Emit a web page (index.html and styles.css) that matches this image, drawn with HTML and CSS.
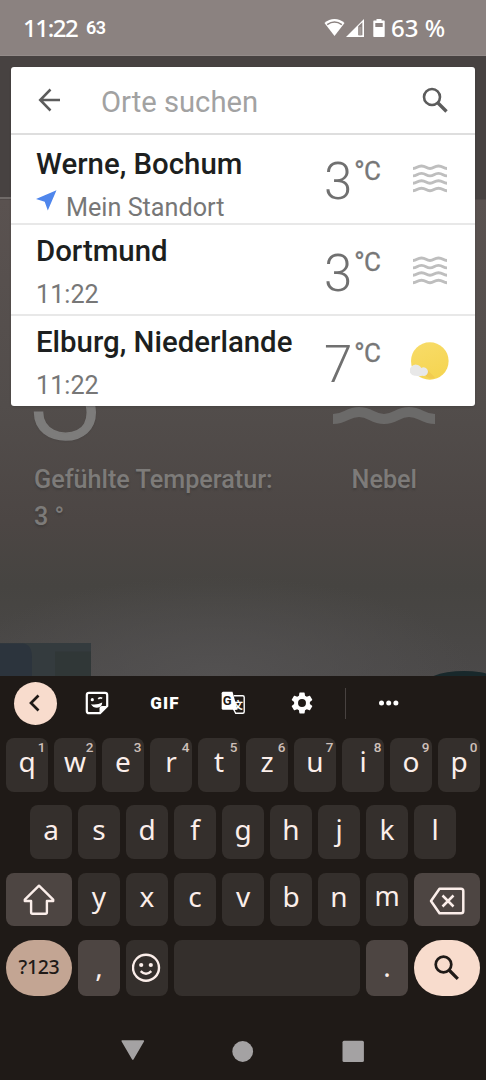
FILE: index.html
```html
<!DOCTYPE html>
<html lang="de">
<head>
<meta charset="utf-8">
<title>Orte suchen</title>
<link rel="stylesheet" href="styles.css">
</head>
<body>
<div class="phone">
  <header class="status">
    <span class="clock">11:22</span>
    <span class="note">63</span>
    <svg class="wifi" width="21" height="19" viewBox="0 0 22 19"><path d="M.5 4.800C6.500-.8 15.500-.8 21.500 4.800L11 18.300z" fill="#fff"/><path d="M3.300 6.500Q11 1 18.700 6.500" fill="none" stroke="#8b8280" stroke-width="1.600"/></svg>
    <svg class="signal" width="18" height="18" viewBox="0 0 18 18"><path d="M0 18L18 0v18z" fill="#fff"/><path d="M12.200 7.300L16.400 3.300v13H12.200z" fill="#8b8280"/><path d="M13.200 8h2.200v8.300h-2.200z" fill="#a39b99"/></svg>
    <svg class="battery" width="12" height="18" viewBox="0 0 12 18"><path d="M3.500 0h5v1.500H11q.7 0 .7.800v15q0 .7-.7.700H1q-.7 0-.7-.700v-15q0-.8.7-.800h2.500z" fill="#fff"/><path d="M2.300 4h7.400v4H2.300z" fill="#8b8280"/></svg>
    <span class="percent">63 %</span>
  </header>

  <main class="app">
    <section class="weather">
      <div class="now">
        <span class="now-temp">3</span>
        <svg class="now-icon" width="102" height="20" viewBox="0 0 102 20"><path d="M0 12C13 12 14 5 26 5S39 12 51 12 64 5 76 5 89 12 102 12" fill="none" stroke="#6b6a69" stroke-width="10"/></svg>
      </div>
      <div class="details">
        <p class="feels">Gefühlte Temperatur:<br>3 °</p>
        <p class="condition">Nebel</p>
      </div>
      <svg class="scene" width="486" height="34" viewBox="0 0 486 34"><path d="M0 1h91v33H0z" fill="#343b3e"/><path d="M0 1.500h22q10 0 10 14V34H0z" fill="#2c343d"/><path d="M55 9.500h36V34H55z" fill="#303737"/><ellipse cx="464" cy="47" rx="44" ry="18" fill="#18282b"/></svg>
    </section>

    <section class="dialog">
      <div class="search">
        <svg class="back" width="24" height="24" viewBox="0 0 24 24"><path d="M22 12H3M12.500 1.500L2.200 12 12.500 22.500" fill="none" stroke="#5c5c5c" stroke-width="2.500"/></svg>
        <span class="hint">Orte suchen</span>
        <svg class="lens" width="26" height="26" viewBox="0 0 26 26"><circle cx="10" cy="10" r="8" fill="none" stroke="#5c5c5c" stroke-width="2.600"/><path d="M15.500 15.500L24.500 24.500" stroke="#5c5c5c" stroke-width="3.400"/></svg>
      </div>
      <article class="place first">
        <div class="info">
          <h2>Werne, Bochum</h2>
          <p><svg class="pin" width="21" height="21" viewBox="0 0 21 21"><path d="M20.500 .3L0 9l8.700 2.800L11.800 20.500z" fill="#4f86ec"/></svg>Mein Standort</p>
        </div>
        <span class="temp">3</span><span class="unit"><span class="deg">°</span>C</span>
        <svg class="icon" width="40" height="40" viewBox="0 0 40 40"><g fill="none" stroke="#bebebe" stroke-width="2.900"><path id="fog" d="M3 9.500C7 9.500 7 7 11.500 7S16 9.500 20 9.500 24 7 28.500 7 33 9.500 37 9.500"/><use href="#fog" y="7.400"/><use href="#fog" y="14.800"/><use href="#fog" y="22.200"/></g></svg>
      </article>
      <article class="place">
        <div class="info"><h2>Dortmund</h2><p>11:22</p></div>
        <span class="temp">3</span><span class="unit"><span class="deg">°</span>C</span>
        <svg class="icon" width="40" height="40" viewBox="0 0 40 40"><g fill="none" stroke="#bebebe" stroke-width="2.900"><use href="#fog"/><use href="#fog" y="7.400"/><use href="#fog" y="14.800"/><use href="#fog" y="22.200"/></g></svg>
      </article>
      <article class="place">
        <div class="info"><h2>Elburg, Niederlande</h2><p>11:22</p></div>
        <span class="temp">7</span><span class="unit"><span class="deg">°</span>C</span>
        <svg class="icon" width="40" height="40" viewBox="0 0 40 40"><defs><linearGradient id="sun" x2=".4" y2="1"><stop stop-color="#f8dc69"/><stop offset="1" stop-color="#f5d553"/></linearGradient></defs><circle cx="19.800" cy="19" r="18.800" fill="url(#sun)"/><path d="M14 32.500l3-5 8 8q-5 3-11-3z" fill="#f1cb50"/><path d="M5.500 33.800a5.200 5.200 0 0 1-4.600-8.500 6 6 0 0 1 10.400.7 4.300 4.300 0 1 1 1.400 7.800q-3.500 .8-7.200 0z" fill="#e8e8e8"/></svg>
      </article>
    </section>
  </main>

  <footer class="keyboard">
    <div class="tools">
      <span class="collapse"><svg width="20" height="20" viewBox="0 0 20 20"><path d="M13.500 2.500L6 10l7.500 7.500" fill="none" stroke="#1f1a17" stroke-width="2.700"/></svg></span>
      <svg width="24" height="24" viewBox="0 0 24 24"><path d="M4 1.800h16q2.200 0 2.200 2.200v11L15 22.200H4q-2.200 0-2.200-2.200V4Q1.800 1.800 4 1.800z" fill="none" stroke="#fff" stroke-width="2.200"/><path d="M14.500 22v-4.500q0-2.500 2.500-2.500H22z" fill="#fff"/><circle cx="7.300" cy="8.700" r="1.600" fill="#fff"/><path d="M13.200 7.800q2-1.800 4-.4" fill="none" stroke="#fff" stroke-width="1.700"/><path d="M6 13.200q6 1 11.300-1.700-.5 5-5.300 5.300-4 0-6-3.600z" fill="#fff"/></svg>
      <span class="gif">GIF</span>
      <svg width="24" height="24" viewBox="0 0 24 24"><path d="M2 .8h9.500l5 18H2.200Q.7 18.800.7 17.300V2.300Q.7.800 2 .8z" fill="#fff"/><path d="M12.800 4.800h8.900q1.500 0 1.500 1.500v14.500q0 1.500-1.500 1.500h-7L12.500 18" fill="none" stroke="#fff" stroke-width="1.400"/><text class="tr-g" x="1.800" y="14">G</text><text class="tr-z" x="12" y="17.500">文</text></svg>
      <svg width="24" height="24" viewBox="0 0 24 24"><path fill="#fff" transform="translate(-1.200 -1.200) scale(1.100)" d="M19.140 12.940c.04-.3.060-.61.060-.94 0-.32-.02-.64-.07-.94l2.030-1.580c.18-.14.230-.41.120-.61l-1.920-3.320c-.12-.22-.37-.29-.59-.22l-2.390.96c-.5-.38-1.030-.7-1.620-.94l-.36-2.540c-.04-.24-.24-.41-.48-.41h-3.840c-.24 0-.43.170-.47.410l-.36 2.540c-.59.240-1.130.570-1.620.94l-2.390-.96c-.22-.08-.47 0-.59.220L2.740 8.870c-.12.210-.08.470.120.610l2.030 1.580c-.05.300-.09.630-.09.940s.02.640.070.940l-2.030 1.580c-.18.140-.23.410-.12.610l1.920 3.320c.12.220.370.290.590.220l2.390-.96c.5.380 1.030.700 1.620.940l.36 2.540c.05.240.240.410.480.410h3.840c.24 0 .44-.17.470-.41l.36-2.540c.59-.24 1.130-.56 1.620-.94l2.390.96c.22.080.470 0 .59-.22l1.920-3.320c.12-.22.070-.47-.12-.61zM12 15.600A3.600 3.600 0 1 1 12 8.400a3.600 3.600 0 0 1 0 7.200z"/></svg>
      <span class="rule"></span>
      <svg width="24" height="24" viewBox="0 0 24 24"><g fill="#fff"><circle cx="4.500" cy="12" r="2.500"/><circle cx="11.700" cy="12" r="2.500"/><circle cx="18.900" cy="12" r="2.500"/></g></svg>
    </div>
    <div class="keys">
      <span class="key">q<sup>1</sup></span><span class="key">w<sup>2</sup></span><span class="key">e<sup>3</sup></span><span class="key">r<sup>4</sup></span><span class="key">t<sup>5</sup></span><span class="key">z<sup>6</sup></span><span class="key">u<sup>7</sup></span><span class="key">i<sup>8</sup></span><span class="key">o<sup>9</sup></span><span class="key">p<sup>0</sup></span>
    </div>
    <div class="keys">
      <span class="key">a</span><span class="key">s</span><span class="key">d</span><span class="key">f</span><span class="key">g</span><span class="key">h</span><span class="key">j</span><span class="key">k</span><span class="key">l</span>
    </div>
    <div class="keys">
      <span class="key wide"><svg width="34" height="34" viewBox="0 0 34 34"><path d="M17 3.700L2.800 17.700v1.300h6.300v11.300q0 1.400 1.400 1.400h13q1.400 0 1.400-1.400V19h6.300v-1.300z" fill="none" stroke="#fbeeea" stroke-width="2.400" stroke-linejoin="round"/></svg></span>
      <span class="key">y</span><span class="key">x</span><span class="key">c</span><span class="key">v</span><span class="key">b</span><span class="key">n</span><span class="key narrow">m</span>
      <span class="key wide erase"><svg width="38" height="30" viewBox="0 0 38 30"><path d="M11.500 2.700h21.500q2.300 0 2.300 2.300v20q0 2.300-2.300 2.300H11.500L3 15z" fill="none" stroke="#fbeeea" stroke-width="2.500" stroke-linejoin="round"/><path d="M14.500 9.500l11 11M25.500 9.500l-11 11" stroke="#fbeeea" stroke-width="2.500"/></svg></span>
    </div>
    <div class="keys last">
      <span class="key wide symbols">?123</span>
      <span class="key shade">,</span>
      <span class="key"><svg width="30" height="30" viewBox="0 0 30 30"><circle cx="14" cy="14.700" r="13" fill="none" stroke="#fbeeea" stroke-width="2.400"/><circle cx="9.200" cy="12" r="2.100" fill="#fbeeea"/><circle cx="18.800" cy="12" r="2.100" fill="#fbeeea"/><path d="M8.700 18.200q5.300 5.300 10.600 0" fill="none" stroke="#fbeeea" stroke-width="2.400"/></svg></span>
      <span class="key space"></span>
      <span class="key shade">.</span>
      <span class="key wide enter"><svg width="26" height="26" viewBox="0 0 26 26"><circle cx="9.500" cy="9.500" r="7.800" fill="none" stroke="#1f1a17" stroke-width="2.700"/><path d="M15 15L23.800 23.800" stroke="#1f1a17" stroke-width="3.200"/></svg></span>
    </div>
    <nav class="nav">
      <svg width="24" height="22" viewBox="0 0 24 22"><path d="M1.300 1h21L11.800 19z" fill="#a4a2a3" stroke="#a4a2a3" stroke-width="1.600" stroke-linejoin="round"/></svg>
      <svg width="22" height="22" viewBox="0 0 22 22"><circle cx="10.700" cy="11.500" r="10.400" fill="#a4a2a3"/></svg>
      <svg width="22" height="22" viewBox="0 0 22 22"><rect x=".5" y=".8" width="21.400" height="21.200" rx="1.500" fill="#a4a2a3"/></svg>
    </nav>
  </footer>
</div>
</body>
</html>
```

FILE: styles.css
```css
* { box-sizing: border-box; }
body { margin: 0; font-family: Roboto, "Liberation Sans", sans-serif; }
h2, p { margin: 0; }
svg { display: block; flex: none; }
.phone { width: 486px; height: 1080px; display: flex; flex-direction: column; overflow: hidden; }

.status { height: 56px; padding: 0 40px 0 23px; display: flex; align-items: center; background: #8b8280; border-bottom: 1px solid #938b89; color: #fff; font-family: "Noto Sans", sans-serif; }
.clock { width: 63px; font-size: 24px; font-weight: 500; letter-spacing: -1.400px; }
.note { font-family: Roboto, sans-serif; font-size: 18px; font-weight: 600; letter-spacing: -.6px; }
.wifi { margin-left: auto; }
.signal { margin-left: 1px; }
.battery { margin: 0 6px 0 9.500px; }
.percent { font-size: 24px; font-weight: 500; white-space: nowrap; width: 55px; }

.app { position: relative; height: 620px; }
.weather { height: 100%; overflow: hidden; display: flex; flex-direction: column; background: linear-gradient(#6f6a68, #6f6a68) 0 141px / 11px 2px no-repeat, radial-gradient(ellipse 260px 100px at 215px 620px, #535151, #53515100), linear-gradient(#474241 0 143px, #5a5250 144px, #524d4b 350px, #4c4644 465px, #464441 530px, #4b4949 620px); }
.now { height: 388px; padding: 0 51px 0 28px; display: flex; justify-content: space-between; align-items: flex-end; }
.now-temp { font-size: 136px; line-height: 102px; font-weight: 300; color: #7d7c7b; -webkit-text-stroke: 1.500px #7d7c7b; text-shadow: 0 1px 2px #3335; }
.now-icon { margin-bottom: 17px; }
.details { display: flex; justify-content: space-between; padding: 18px 69px 0 34px; font-size: 25.200px; line-height: 36.500px; font-weight: 500; color: #7d7b79; text-shadow: 0 2px 2px #3337; }
.scene { margin-top: auto; }

.dialog { position: absolute; left: 11px; top: 11px; width: 464px; height: 339px; border-radius: 3px; background: #fff; box-shadow: 0 1px 2px #3335; overflow: hidden; }
.search { height: 68px; padding: 0 27px; display: flex; align-items: center; border-bottom: 2px solid #dedede; }
.hint { margin: 3px 0 0 39px; font-size: 29.200px; color: #a2a2a2; }
.lens { margin-left: auto; }
.place { height: 91px; padding: 0 25px; display: flex; border-top: 2px solid #e8e8e8; }
.place.first { height: 88px; border-top: 0; }
.info { width: 288px; padding-top: 9px; flex: none; white-space: nowrap; }
.first .info { padding-top: 12px; }
h2 { font-size: 29.400px; line-height: 34px; font-weight: 500; color: #1d1f20; }
.info p { display: flex; font-size: 25.200px; line-height: 34px; margin-top: 10px; color: #777; }
.pin { margin: -1px 9px 0 0; }
.temp { font-size: 51px; line-height: 52px; font-weight: 300; color: #707070; padding-top: 23px; width: 30px; }
.unit { font-size: 26px; line-height: 30px; color: #777; padding-top: 22px; width: 56px; -webkit-text-stroke: .3px #777; display: flex; }
.deg { font-size: 29px; line-height: 32px; width: 10px; }
.icon { margin-top: 26px; }
.first .temp { padding-top: 21px; }
.first .unit { padding-top: 21px; }
.first .icon { margin-top: 24px; }

.keyboard { height: 404px; background: #1f1a17; display: flex; flex-direction: column; }
.tools { height: 54px; margin-bottom: 8px; display: grid; grid-template-columns: 70px 53px 84px 52px 86px 1px 85px; align-items: center; justify-items: center; }
.collapse { width: 43px; height: 43px; border-radius: 50%; background: #f8dccd; display: grid; place-items: center; }
.gif { color: #fff; font-size: 17px; font-weight: 900; letter-spacing: 1.200px; }
.tr-g { font: 700 13px Roboto, sans-serif; fill: #1f1a17; }
.tr-z { font: 700 10px "Noto Sans CJK SC", sans-serif; fill: #fff; }
.rule { width: 1px; height: 31px; background: #484240; }
.keys { display: flex; justify-content: center; gap: 6px; height: 53.500px; margin-bottom: 13.800px; }
.key { position: relative; width: 42px; border-radius: 8px; background: #342f2c; color: #fbeeea; display: flex; align-items: center; justify-content: center; font: 28px/46px "Noto Sans", sans-serif; padding-bottom: 7px; }
.key:has(svg) { padding: 0; }
.key sup { position: absolute; right: 2.500px; top: 2px; font: 500 13.500px/15px Roboto, sans-serif; color: #cfc0ba; }
.narrow { font-size: 27px; }
.wide { width: 66px; background: #4d4542; }
.shade { background: #4d4542; padding: 0 0 3px; }
.key.erase { padding-top: 3px; }
.last { height: 56px; margin-bottom: 0; }
.symbols { border-radius: 28px; background: #c3a593; color: #1f1a17; font-size: 19.500px; font-weight: 500; letter-spacing: -.3px; padding: 0 0 1px; }
.space { width: 186px; }
.enter { border-radius: 28px; background: #f8dccd; }
.nav { margin-top: 44px; height: 22px; display: grid; grid-template-columns: 110px 109px 112px; padding-left: 78px; justify-items: center; }
```
